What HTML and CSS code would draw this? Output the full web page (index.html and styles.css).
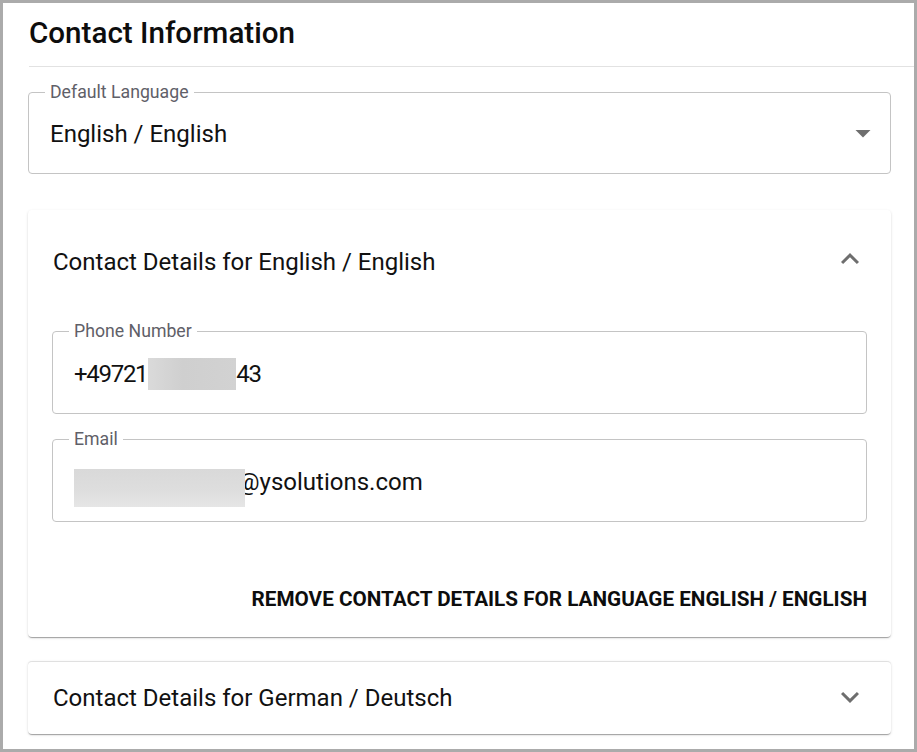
FILE: index.html
```html
<!DOCTYPE html>
<html lang="en">
<head>
<meta charset="utf-8">
<title>Contact Information</title>
<link rel="stylesheet" href="styles.css">
</head>
<body>
<div class="frame">
  <header class="page-header">
    <h1 class="page-title">Contact Information</h1>
  </header>
  <main class="content">
    <fieldset class="field">
      <legend class="field-label">Default Language</legend>
      <div class="field-value field-value--select">
        <span>English / English</span>
        <svg class="icon icon--caret" viewBox="0 0 24 24" aria-hidden="true"><path d="M7 10l5 5 5-5z"/></svg>
      </div>
    </fieldset>

    <section class="card card--first">
      <div class="card-header card-header--expanded">
        <span class="card-title">Contact Details for English / English</span>
        <svg class="icon icon--chevron" viewBox="0 0 24 24" aria-hidden="true"><path d="M12 8l-6 6 1.41 1.41L12 10.83l4.59 4.58L18 14z"/></svg>
      </div>
      <div class="card-body">
        <fieldset class="field">
          <legend class="field-label">Phone Number</legend>
          <div class="field-value">
            <span class="digits">+49721</span><span class="redact redact--phone"></span><span class="digits">43</span>
          </div>
        </fieldset>
        <fieldset class="field field--spaced">
          <legend class="field-label">Email</legend>
          <div class="field-value">
            <span class="redact redact--email"></span><span>@ysolutions.com</span>
          </div>
        </fieldset>
        <div class="card-actions">
          <button class="text-button" type="button">REMOVE CONTACT DETAILS FOR LANGUAGE ENGLISH / ENGLISH</button>
        </div>
      </div>
    </section>

    <section class="card card--next">
      <div class="card-header card-header--collapsed">
        <span class="card-title">Contact Details for German / Deutsch</span>
        <svg class="icon icon--chevron" viewBox="0 0 24 24" aria-hidden="true"><path d="M16.59 8.59L12 13.17 7.41 8.59 6 10l6 6 6-6z"/></svg>
      </div>
    </section>
  </main>
</div>
</body>
</html>
```

FILE: styles.css
```css
* {
  box-sizing: border-box;
}

html, body {
  margin: 0;
  padding: 0;
  background: #ffffff;
}

body {
  font-family: Roboto, "Noto Sans", "Liberation Sans", sans-serif;
  color: #111111;
}

.frame {
  width: 917px;
  height: 752px;
  border: 3px solid #ababab;
  overflow: hidden;
  background: #ffffff;
}

.page-header {
  margin-left: 26px;
  padding: 15px 0 18px;
  border-bottom: 1px solid #e2e2e2;
}

.page-title {
  margin: 0;
  font-size: 29.6px;
  line-height: 30px;
  font-weight: 500;
  color: #0d0d0d;
}

.content {
  padding: 16px 23px 0 25px;
}

.field {
  margin: 0;
  padding: 0 20px 0 21px;
  border: 1px solid #c4c4c4;
  border-radius: 4px;
  min-width: 0;
}

.field--spaced {
  margin-top: 16px;
}

.field-label {
  margin-left: -5px;
  padding: 0 5px;
  font-size: 17.7px;
  line-height: 18px;
  color: #5f6068;
}

.field-value {
  display: flex;
  align-items: center;
  height: 73px;
  padding: 0 0 6px;
  font-size: 24px;
  line-height: 28px;
  color: #111111;
}

.field-value--select {
  height: 72px;
  justify-content: space-between;
  padding-right: 0;
  margin-right: -11px;
}

.digits {
  letter-spacing: -1.3px;
}

.icon {
  width: 36px;
  height: 36px;
  fill: #6e6e6e;
  flex: none;
}

.icon--caret {
  margin-top: -2px;
}

.redact {
  display: inline-block;
  flex: none;
}

.redact--phone {
  width: 88px;
  height: 32px;
  margin-left: 1px;
  background: linear-gradient(90deg, #dadada 0%, #cfcfcf 40%, #d2d2d2 100%);
}

.redact--email {
  position: relative;
  z-index: 1;
  width: 171px;
  height: 38px;
  margin-right: -7px;
  margin-top: 13px;
  background: linear-gradient(180deg, #d9d9d9 0%, #dedede 60%, #e6e6e6 100%);
}

.card {
  background: #ffffff;
  border-radius: 4px;
  box-shadow: 0 2px 1px -1px rgba(0, 0, 0, 0.2), 0 1px 1px 0 rgba(0, 0, 0, 0.14), 0 1px 3px 0 rgba(0, 0, 0, 0.12);
}

.card--first {
  margin-top: 36px;
}

.card--next {
  margin-top: 24px;
  border-top: 1px solid #e0e0e0;
}

.card-header {
  display: flex;
  align-items: center;
  justify-content: space-between;
  padding: 0 23px 0 25px;
}

.card-header--expanded {
  height: 104px;
}

.card-header--collapsed {
  height: 72px;
}

.card-title {
  font-size: 24px;
  line-height: 28px;
  color: #111111;
}

.card-header .icon--chevron {
  margin-top: -6px;
}

.card-header--collapsed .icon--chevron {
  margin-top: -2px;
}

.card-body {
  padding: 8px 24px 26px;
}

.card-actions {
  display: flex;
  justify-content: flex-end;
  margin-top: 65px;
}

.text-button {
  margin: 0;
  padding: 0;
  border: 0;
  background: none;
  font-family: inherit;
  font-size: 20.7px;
  line-height: 24px;
  font-weight: 700;
  color: #0d0d0d;
  cursor: pointer;
}
```
